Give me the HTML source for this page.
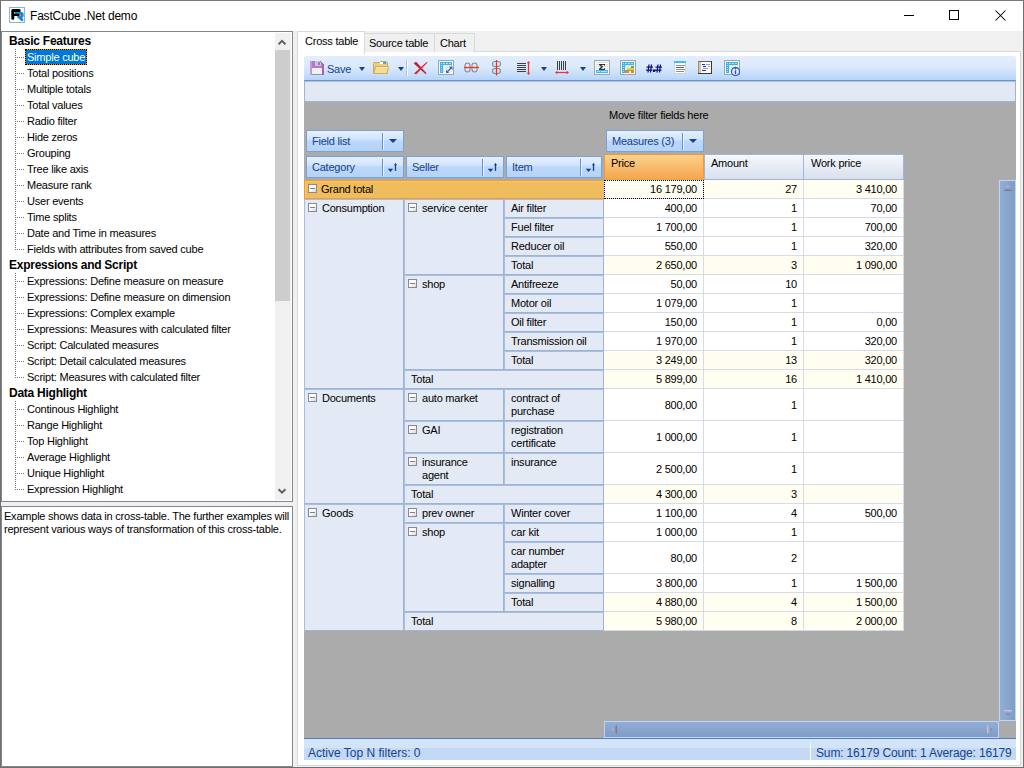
<!DOCTYPE html>
<html><head><meta charset="utf-8">
<style>
*{margin:0;padding:0;box-sizing:border-box}
html,body{width:1024px;height:768px;overflow:hidden;background:#f0f0f0;font-family:"Liberation Sans",sans-serif;font-size:11px;color:#000}
.a{position:absolute}
.t{position:absolute;white-space:pre;letter-spacing:-0.22px;line-height:16px}
#win{left:0;top:0;width:1024px;height:768px;border:1px solid #6f6f6f;border-top-color:#7a7a7a}
#title{left:1px;top:1px;width:1022px;height:30px;background:#fff}
/* tree */
#tree{left:1px;top:31px;width:292px;height:471px;background:#fff;border:1px solid #828790}
#tsb{left:275px;top:33px;width:16px;height:467px;background:#f0f0f0}
#tthumb{left:275px;top:50px;width:15px;height:251px;background:#cdcdcd}
#desc{left:1px;top:506px;width:292px;height:261px;background:#fff;border:1px solid #828790}
.hdr{font-weight:bold;letter-spacing:-0.25px;font-size:12px}
.dotv{width:1px;background:repeating-linear-gradient(to bottom,#6e6e6e 0,#6e6e6e 1px,transparent 1px,transparent 2px)}
.doth{width:8px;height:1px;background:repeating-linear-gradient(to right,#6e6e6e 0,#6e6e6e 1px,transparent 1px,transparent 2px)}
/* tabs */
#page{left:297px;top:51px;width:724px;height:715px;background:#fff;border:1px solid #d9d9d9}
.tab{position:absolute;top:33px;height:19px;background:#f0f0f0;border:1px solid #d9d9d9;border-bottom:none}
#tabsel{left:297px;top:31px;width:68px;height:23px;background:#fff;border:1px solid #d9d9d9;border-bottom:none}
/* toolbar */
#tb{left:304px;top:56px;width:712px;height:25px;background:linear-gradient(#e3eefd 0%,#dbe9fc 45%,#c6ddfb 80%,#b4d3fb 100%);border-bottom:1px solid #6c95cf;border-radius:2px 2px 0 0}
#fbar{left:304px;top:81px;width:712px;height:21px;background:#e3e9f4;border:1px solid #9fb6d3;border-top-color:#a9c0de}
#grey{left:304px;top:102px;width:712px;height:636px;background:#ababab}
.btn{position:absolute;height:22px;border:1px solid #7ea2cf;background:linear-gradient(#e4efff 0%,#d3e5fc 40%,#bcd8fa 50%,#b4d3f8 100%);}
.btn .dv{position:absolute;top:2px;bottom:1px;width:1px;background:#6f8fbf;box-shadow:1px 0 0 #eaf3ff}
.btxt{color:#15428b}
.arr{position:absolute;width:0;height:0;border-left:4px solid transparent;border-right:4px solid transparent;border-top:4px solid #15428b}
/* grid */
.rh{position:absolute;background:#e4eaf5;border:1px solid #9db4d3;border-left-color:#a8bfdc;border-top-color:#a8bfdc}
.dc{position:absolute;background:#fff;border-right:1px solid #d5dce9;border-bottom:1px solid #d5dce9;text-align:right;padding-right:6px;white-space:pre;letter-spacing:-0.22px;line-height:18px}
.dc.tot{background:#fffef0}
.box{position:absolute;width:9px;height:9px;border:1px solid #868a94;background:linear-gradient(135deg,#fff 0%,#fff 45%,#d4d4d4 100%)}
.box:after{content:"";position:absolute;left:1px;top:3px;width:5px;height:1px;background:#808080}
#status{left:304px;top:738px;width:712px;height:22px;border-top:1px solid #567db8;background:linear-gradient(#d3e3f8 0,#d3e3f8 9px,#c3d9f5 9px,#c3d9f5 100%)}
.stt{color:#15428b;font-size:12px;letter-spacing:-0.15px}
</style></head><body>
<div id="win" class="a"></div>
<div id="title" class="a"></div>
<!-- title icon -->
<div class="a" style="left:9px;top:7px;width:16px;height:16px;border:1px solid #8ab4d0;background:#fff"></div>
<svg class="a" style="left:9px;top:7px" width="16" height="16" viewBox="0 0 16 16">
<path d="M7.2 6.2H11.3Q13.3 6.2 13.3 8Q13.3 9.8 11.2 9.8H9.5L13 12.8" stroke="#1a86cc" stroke-width="2.8" fill="none" stroke-linecap="round" stroke-linejoin="round"/>
<path d="M3.8 11.2V3.6H10.2" stroke="#000" stroke-width="3" fill="none" stroke-linecap="round" stroke-linejoin="round"/>
<path d="M4.5 7.8H9.6" stroke="#000" stroke-width="2.2" fill="none" stroke-linecap="round"/>
</svg>
<div class="t" style="left:30px;top:8px;font-size:12px;letter-spacing:-0.2px;line-height:17px">FastCube .Net demo</div>
<!-- window controls -->
<div class="a" style="left:904px;top:15px;width:10px;height:1px;background:#000"></div>
<div class="a" style="left:949px;top:10px;width:10px;height:10px;border:1px solid #000"></div>
<svg class="a" style="left:995px;top:10px" width="11" height="11" viewBox="0 0 11 11"><path d="M0.5 0.5L10.5 10.5M10.5 0.5L0.5 10.5" stroke="#000" stroke-width="1.05"/></svg>

<!-- TREE -->
<div id="tree" class="a"></div>
<div id="tsb" class="a"></div>
<div id="tthumb" class="a"></div>
<svg class="a" style="left:277px;top:38px" width="10" height="8" viewBox="0 0 10 8"><path d="M1.6 6.2L5 2.8L8.4 6.2" stroke="#606060" stroke-width="2" fill="none"/></svg>
<svg class="a" style="left:277px;top:487px" width="10" height="8" viewBox="0 0 10 8"><path d="M1.6 2.2L5 5.6L8.4 2.2" stroke="#606060" stroke-width="2" fill="none"/></svg>
<div class="t hdr" style="left:9px;top:33px">Basic Features</div>
<div class="a" style="left:25px;top:49px;width:62px;height:16px;background:#0078d7;border:1px solid #ff8c00"></div><div class="a" style="left:25px;top:49px;width:62px;height:16px;border:1px dotted #000"></div>
<div class="t" style="left:27px;top:49px;color:#fff">Simple cube</div>
<div class="a doth" style="left:17px;top:57px"></div>
<div class="t" style="left:27px;top:65px">Total positions</div>
<div class="a doth" style="left:17px;top:73px"></div>
<div class="t" style="left:27px;top:81px">Multiple totals</div>
<div class="a doth" style="left:17px;top:89px"></div>
<div class="t" style="left:27px;top:97px">Total values</div>
<div class="a doth" style="left:17px;top:105px"></div>
<div class="t" style="left:27px;top:113px">Radio filter</div>
<div class="a doth" style="left:17px;top:121px"></div>
<div class="t" style="left:27px;top:129px">Hide zeros</div>
<div class="a doth" style="left:17px;top:137px"></div>
<div class="t" style="left:27px;top:145px">Grouping</div>
<div class="a doth" style="left:17px;top:153px"></div>
<div class="t" style="left:27px;top:161px">Tree like axis</div>
<div class="a doth" style="left:17px;top:169px"></div>
<div class="t" style="left:27px;top:177px">Measure rank</div>
<div class="a doth" style="left:17px;top:185px"></div>
<div class="t" style="left:27px;top:193px">User events</div>
<div class="a doth" style="left:17px;top:201px"></div>
<div class="t" style="left:27px;top:209px">Time splits</div>
<div class="a doth" style="left:17px;top:217px"></div>
<div class="t" style="left:27px;top:225px">Date and Time in measures</div>
<div class="a doth" style="left:17px;top:233px"></div>
<div class="t" style="left:27px;top:241px">Fields with attributes from saved cube</div>
<div class="a doth" style="left:17px;top:249px"></div>
<div class="a dotv" style="left:15px;top:49px;height:201px"></div>
<div class="t hdr" style="left:9px;top:257px">Expressions and Script</div>
<div class="t" style="left:27px;top:273px">Expressions: Define measure on measure</div>
<div class="a doth" style="left:17px;top:281px"></div>
<div class="t" style="left:27px;top:289px">Expressions: Define measure on dimension</div>
<div class="a doth" style="left:17px;top:297px"></div>
<div class="t" style="left:27px;top:305px">Expressions: Complex example</div>
<div class="a doth" style="left:17px;top:313px"></div>
<div class="t" style="left:27px;top:321px">Expressions: Measures with calculated filter</div>
<div class="a doth" style="left:17px;top:329px"></div>
<div class="t" style="left:27px;top:337px">Script: Calculated measures</div>
<div class="a doth" style="left:17px;top:345px"></div>
<div class="t" style="left:27px;top:353px">Script: Detail calculated measures</div>
<div class="a doth" style="left:17px;top:361px"></div>
<div class="t" style="left:27px;top:369px">Script: Measures with calculated filter</div>
<div class="a doth" style="left:17px;top:377px"></div>
<div class="a dotv" style="left:15px;top:273px;height:105px"></div>
<div class="t hdr" style="left:9px;top:385px">Data Highlight</div>
<div class="t" style="left:27px;top:401px">Continous Highlight</div>
<div class="a doth" style="left:17px;top:409px"></div>
<div class="t" style="left:27px;top:417px">Range Highlight</div>
<div class="a doth" style="left:17px;top:425px"></div>
<div class="t" style="left:27px;top:433px">Top Highlight</div>
<div class="a doth" style="left:17px;top:441px"></div>
<div class="t" style="left:27px;top:449px">Average Highlight</div>
<div class="a doth" style="left:17px;top:457px"></div>
<div class="t" style="left:27px;top:465px">Unique Highlight</div>
<div class="a doth" style="left:17px;top:473px"></div>
<div class="t" style="left:27px;top:481px">Expression Highlight</div>
<div class="a doth" style="left:17px;top:489px"></div>
<div class="a dotv" style="left:15px;top:401px;height:89px"></div>

<!-- DESCRIPTION -->
<div id="desc" class="a"></div>
<div class="t" style="left:4px;top:510px;line-height:13px">Example shows data in cross-table. The further examples will
represent various ways of transformation of this cross-table.</div>

<!-- TABS -->
<div id="page" class="a"></div>
<div class="tab" style="left:364px;width:71px"></div>
<div class="tab" style="left:434px;width:41px"></div>
<div id="tabsel" class="a"></div>
<div class="t" style="left:305px;top:33px">Cross table</div>
<div class="t" style="left:369px;top:35px">Source table</div>
<div class="t" style="left:440px;top:35px">Chart</div>

<!-- TOOLBAR -->
<div id="tb" class="a"></div>
<div class="t btxt" style="left:327px;top:61px">Save</div>
<svg class="a" style="left:310px;top:61px" width="14" height="14" viewBox="0 0 14 14" shape-rendering="crispEdges"><path d="M0 0H10L14 4V14H0Z" fill="#b57ad0"/><rect x="0" y="0" width="2" height="14" fill="#c994e0"/><rect x="12" y="3" width="2" height="11" fill="#a262c2"/><rect x="5" y="0" width="6" height="5" fill="#c8c8c8"/><rect x="8" y="1" width="2" height="3" fill="#b070d0"/><rect x="2" y="7" width="10" height="6" fill="#eef4f2"/><rect x="2" y="13" width="10" height="1" fill="#8a9a90"/><path d="M10 0L14 4" stroke="#9a5abb" stroke-width="1" fill="none" shape-rendering="auto"/></svg>
<div class="arr" style="left:359px;top:67px;border-left-width:3px;border-right-width:3px;border-top-width:4px"></div>
<div class="arr" style="left:398px;top:67px;border-left-width:3px;border-right-width:3px;border-top-width:4px"></div>
<div class="arr" style="left:541px;top:67px;border-left-width:3px;border-right-width:3px;border-top-width:4px"></div>
<div class="arr" style="left:580px;top:67px;border-left-width:3px;border-right-width:3px;border-top-width:4px"></div>
<div class="a" style="left:406px;top:60px;width:1px;height:16px;background:#a8c2e4"></div><div class="a" style="left:407px;top:60px;width:1px;height:16px;background:#fff"></div>
<svg class="a" style="left:373px;top:61px" width="16" height="13" viewBox="0 0 16 13" shape-rendering="crispEdges"><path d="M0.5 2.5Q0.5 1.5 1.5 1.5H6.5L7.5 0.5H13.5L14.5 1.5V12.5H0.5Z" fill="#edcd7e" stroke="#d0a850" stroke-width="1" shape-rendering="auto"/><rect x="7" y="1" width="3" height="2" fill="#ffffff"/><rect x="10" y="1" width="3" height="2" fill="#38aef0"/><path d="M2.5 5.5H15.5L14 12.5H1Z" fill="#f5dc95" stroke="#d4ac55" stroke-width="1" shape-rendering="auto"/><rect x="3" y="6" width="12" height="1" fill="#fbeab8"/></svg>
<svg class="a" style="left:413px;top:61px" width="15" height="14" viewBox="0 0 15 14"><path d="M0.8 2.6Q1.5 0.6 3.4 1L13.6 12.2L12.4 13Z" fill="#c8202c"/><path d="M13.9 0.8L14.3 1.7L3.6 13Q2 13.6 1.2 12.2Z" fill="#d42a32"/></svg>
<svg class="a" style="left:438px;top:60px" width="16" height="15" viewBox="0 0 16 15" shape-rendering="crispEdges"><rect x="0" y="0" width="16" height="15" fill="#9aa8a8"/><rect x="1" y="1" width="14" height="13" fill="#f4f8f8"/><rect x="2" y="2" width="12" height="11" fill="#dfe6e6"/><rect x="2" y="2" width="12" height="3" fill="#3db4ee"/><rect x="2" y="5" width="3" height="8" fill="#3db4ee"/><rect x="5" y="3" width="2" height="1" fill="#a8e0f8"/><rect x="8" y="3" width="2" height="1" fill="#a8e0f8"/><rect x="11" y="3" width="2" height="1" fill="#a8e0f8"/><rect x="3" y="3" width="1" height="1" fill="#a8e0f8"/><rect x="3" y="5" width="1" height="1" fill="#a8e0f8"/><rect x="3" y="7" width="1" height="1" fill="#a8e0f8"/><rect x="3" y="9" width="1" height="1" fill="#a8e0f8"/><rect x="3" y="11" width="1" height="1" fill="#a8e0f8"/><rect x="6" y="6" width="2" height="1" fill="#ffffff"/><rect x="9" y="6" width="2" height="1" fill="#ffffff"/><rect x="12" y="6" width="2" height="1" fill="#ffffff"/><rect x="6" y="8" width="2" height="1" fill="#ffffff"/><rect x="9" y="8" width="2" height="1" fill="#ffffff"/><rect x="12" y="8" width="2" height="1" fill="#ffffff"/><rect x="6" y="10" width="2" height="1" fill="#ffffff"/><rect x="9" y="10" width="2" height="1" fill="#ffffff"/><rect x="12" y="10" width="2" height="1" fill="#ffffff"/><rect x="6" y="12" width="2" height="1" fill="#ffffff"/><rect x="9" y="12" width="2" height="1" fill="#ffffff"/><rect x="12" y="12" width="2" height="1" fill="#ffffff"/><g shape-rendering="auto"><path d="M9.5 11.5L13 8" stroke="#3458d0" stroke-width="1.1"/><path d="M11 6.5L14.5 6.5L14.5 10Z M8 9.8L8 13L11.2 13Z" fill="#3458d0"/></g></svg>
<svg class="a" style="left:463px;top:62px" width="17" height="11" viewBox="0 0 17 11"><rect x="2" y="1" width="5" height="9" rx="2.5" fill="none" stroke="#8a8a8a" stroke-width="1.1"/><rect x="9" y="1" width="5" height="9" rx="2.5" fill="none" stroke="#8a8a8a" stroke-width="1.1"/><path d="M1 5.5H16" stroke="#ee3322" stroke-width="1.3"/></svg>
<svg class="a" style="left:491px;top:60px" width="11" height="16" viewBox="0 0 11 16"><rect x="1.5" y="1.5" width="8" height="5" rx="2.5" fill="none" stroke="#8a8a8a" stroke-width="1.1"/><rect x="1.5" y="8.5" width="8" height="5" rx="2.5" fill="none" stroke="#8a8a8a" stroke-width="1.1"/><path d="M5.5 0V15.5" stroke="#ee3322" stroke-width="1.3"/></svg>
<svg class="a" style="left:516px;top:60px" width="15" height="16" viewBox="0 0 15 16"><path d="M1 3.5H10M1 5.5H10M1 7.5H10M1 9.5H10M1 11.5H10" stroke="#404040" stroke-width="1"/><path d="M12.5 2V14" stroke="#ee3322" stroke-width="1.2"/><path d="M10.8 3.3L12.5 1L14.2 3.3ZM10.8 12.7L12.5 15L14.2 12.7Z" fill="#ee3322"/></svg>
<svg class="a" style="left:554px;top:60px" width="16" height="15" viewBox="0 0 16 15"><path d="M3.5 1V10M5.5 1V10M7.5 1V10M9.5 1V10M11.5 1V10" stroke="#404040" stroke-width="1"/><path d="M2 12.5H14" stroke="#ee3322" stroke-width="1.2"/><path d="M3.3 10.8L1 12.5L3.3 14.2ZM12.7 10.8L15 12.5L12.7 14.2Z" fill="#ee3322"/></svg>
<svg class="a" style="left:594px;top:60px" width="16" height="15" viewBox="0 0 16 15" shape-rendering="crispEdges"><rect x="0" y="0" width="16" height="15" fill="#9aa8a8"/><rect x="1" y="1" width="14" height="13" fill="#f6f9f9"/><rect x="2" y="2" width="12" height="8" fill="#d9dfdf"/><rect x="2" y="3" width="12" height="1" fill="#ffffff"/><rect x="2" y="5" width="12" height="1" fill="#ffffff"/><rect x="2" y="7" width="12" height="1" fill="#ffffff"/><rect x="2" y="9" width="12" height="1" fill="#ffffff"/><rect x="2" y="10" width="12" height="3" fill="#44b8f0"/><rect x="3" y="11" width="3" height="1" fill="#a8e0f8"/><rect x="7" y="11" width="3" height="1" fill="#a8e0f8"/><rect x="10" y="11" width="3" height="1" fill="#a8e0f8"/><rect x="5" y="4" width="6" height="1" fill="#303030"/><rect x="5" y="9" width="6" height="1" fill="#303030"/><rect x="10" y="5" width="1" height="1" fill="#606060"/><rect x="10" y="8" width="1" height="1" fill="#606060"/><path d="M5.5 4.5L8.2 6.8L5.5 9.2" stroke="#303030" stroke-width="1.4" fill="none" shape-rendering="auto"/></svg>
<svg class="a" style="left:620px;top:60px" width="16" height="15" viewBox="0 0 16 15" shape-rendering="crispEdges"><rect x="0" y="0" width="16" height="15" fill="#9aa8a8"/><rect x="1" y="1" width="14" height="13" fill="#f4f8f8"/><rect x="2" y="2" width="12" height="11" fill="#dfe6e6"/><rect x="2" y="2" width="12" height="3" fill="#3db4ee"/><rect x="2" y="5" width="3" height="8" fill="#3db4ee"/><rect x="5" y="3" width="2" height="1" fill="#a8e0f8"/><rect x="8" y="3" width="2" height="1" fill="#a8e0f8"/><rect x="11" y="3" width="2" height="1" fill="#a8e0f8"/><rect x="3" y="3" width="1" height="1" fill="#a8e0f8"/><rect x="3" y="5" width="1" height="1" fill="#a8e0f8"/><rect x="3" y="7" width="1" height="1" fill="#a8e0f8"/><rect x="3" y="9" width="1" height="1" fill="#a8e0f8"/><rect x="3" y="11" width="1" height="1" fill="#a8e0f8"/><rect x="6" y="6" width="2" height="1" fill="#ffffff"/><rect x="9" y="6" width="2" height="1" fill="#ffffff"/><rect x="12" y="6" width="2" height="1" fill="#ffffff"/><rect x="6" y="8" width="2" height="1" fill="#ffffff"/><rect x="9" y="8" width="2" height="1" fill="#ffffff"/><rect x="12" y="8" width="2" height="1" fill="#ffffff"/><rect x="6" y="10" width="2" height="1" fill="#ffffff"/><rect x="9" y="10" width="2" height="1" fill="#ffffff"/><rect x="12" y="10" width="2" height="1" fill="#ffffff"/><rect x="6" y="12" width="2" height="1" fill="#ffffff"/><rect x="9" y="12" width="2" height="1" fill="#ffffff"/><rect x="12" y="12" width="2" height="1" fill="#ffffff"/><rect x="11" y="6" width="3" height="3" fill="#5aae3a"/><rect x="7" y="8" width="7" height="2" fill="#d8d040"/><rect x="5" y="10" width="9" height="3" fill="#e08830"/><rect x="9" y="11" width="2" height="2" fill="#f4f4f4"/></svg>
<svg class="a" style="left:646px;top:64px" width="16" height="9" viewBox="0 0 16 9"><path d="M3 0.5L2 8.5M5.5 0.5L4.5 8.5M0.5 3H7M0 6H6.5" stroke="#10107a" stroke-width="1.25"/><rect x="7" y="5.5" width="2.2" height="2.5" fill="#10107a"/><path d="M12 0.5L11 8.5M14.5 0.5L13.5 8.5M9.5 3H16M9 6H15.5" stroke="#10107a" stroke-width="1.25"/></svg>
<svg class="a" style="left:674px;top:61px" width="12" height="13" viewBox="0 0 12 13" shape-rendering="crispEdges"><rect x="0" y="0" width="12" height="13" fill="#c8d4d4"/><rect x="1" y="2" width="10" height="10" fill="#ffffff"/><rect x="0" y="0" width="12" height="2" fill="#44c0f0"/><rect x="2" y="4" width="9" height="1" fill="#8a9090"/><rect x="2" y="6" width="8" height="1" fill="#50605a"/><rect x="2" y="8" width="9" height="1" fill="#8a9090"/><rect x="2" y="10" width="8" height="1" fill="#8a9090"/></svg>
<svg class="a" style="left:698px;top:61px" width="14" height="13" viewBox="0 0 14 13" shape-rendering="crispEdges"><rect x="0" y="0" width="14" height="13" fill="#3e3828"/><rect x="0" y="0" width="13" height="12" fill="#fbfbf8"/><rect x="0" y="0" width="13" height="1" fill="#6a6050"/><rect x="0" y="0" width="1" height="12" fill="#9a9080"/><rect x="1" y="1" width="2" height="11" fill="#cfc6ae"/><rect x="4" y="3" width="3" height="1" fill="#1030f0"/><rect x="5" y="5" width="3" height="1" fill="#1030f0"/><rect x="4" y="9" width="4" height="1" fill="#1030f0"/><rect x="8" y="3" width="4" height="1" fill="#a0a0a0"/><rect x="10" y="5" width="2" height="1" fill="#a0a0a0"/><rect x="5" y="7" width="5" height="1" fill="#a0a0a0"/></svg>
<svg class="a" style="left:724px;top:60px" width="16" height="16" viewBox="0 0 16 16" shape-rendering="crispEdges"><rect x="0" y="0" width="16" height="15" fill="#9aa8a8"/><rect x="1" y="1" width="14" height="13" fill="#f4f8f8"/><rect x="2" y="2" width="12" height="11" fill="#dfe6e6"/><rect x="2" y="2" width="12" height="3" fill="#3db4ee"/><rect x="2" y="5" width="3" height="8" fill="#3db4ee"/><rect x="5" y="3" width="2" height="1" fill="#a8e0f8"/><rect x="8" y="3" width="2" height="1" fill="#a8e0f8"/><rect x="11" y="3" width="2" height="1" fill="#a8e0f8"/><rect x="3" y="3" width="1" height="1" fill="#a8e0f8"/><rect x="3" y="5" width="1" height="1" fill="#a8e0f8"/><rect x="3" y="7" width="1" height="1" fill="#a8e0f8"/><rect x="3" y="9" width="1" height="1" fill="#a8e0f8"/><rect x="3" y="11" width="1" height="1" fill="#a8e0f8"/><rect x="6" y="6" width="2" height="1" fill="#ffffff"/><rect x="9" y="6" width="2" height="1" fill="#ffffff"/><rect x="12" y="6" width="2" height="1" fill="#ffffff"/><rect x="6" y="8" width="2" height="1" fill="#ffffff"/><rect x="9" y="8" width="2" height="1" fill="#ffffff"/><rect x="12" y="8" width="2" height="1" fill="#ffffff"/><rect x="6" y="10" width="2" height="1" fill="#ffffff"/><rect x="9" y="10" width="2" height="1" fill="#ffffff"/><rect x="12" y="10" width="2" height="1" fill="#ffffff"/><rect x="6" y="12" width="2" height="1" fill="#ffffff"/><rect x="9" y="12" width="2" height="1" fill="#ffffff"/><rect x="12" y="12" width="2" height="1" fill="#ffffff"/><g shape-rendering="auto"><circle cx="11.5" cy="11.5" r="4" fill="#eceff8" stroke="#3458d8" stroke-width="1.3"/><path d="M11.5 10.3V14" stroke="#2a4ad0" stroke-width="1.4"/><circle cx="11.5" cy="8.8" r="0.8" fill="#2a4ad0"/></g></svg>
<div id="fbar" class="a"></div>
<div id="grey" class="a"></div>

<div class="t" style="left:609px;top:107px;color:#000">Move filter fields here</div>
<div class="btn" style="left:306px;top:130px;width:98px;height:22px"><div class="dv" style="left:75px"></div></div><div class="t btxt" style="left:312px;top:133px">Field list</div><div class="arr" style="left:389px;top:139px"></div>
<div class="btn" style="left:606px;top:130px;width:98px;height:22px"><div class="dv" style="left:75px"></div></div><div class="t btxt" style="left:612px;top:133px">Measures (3)</div><div class="arr" style="left:689px;top:139px"></div>
<div class="btn" style="left:306px;top:156px;width:98px;height:22px"><div class="dv" style="left:75px"></div></div><div class="t btxt" style="left:312px;top:159px">Category</div><svg class="a" style="left:387px;top:160px" width="14" height="14" viewBox="0 0 14 14"><path d="M0.8 8.8H6.2L3.5 12Z" fill="#15428b"/><path d="M8.5 11V4.5" stroke="#15428b" stroke-width="1.3" fill="none"/><path d="M7 5.3L8.5 2.8L10 5.3Z" fill="#15428b"/></svg>
<div class="btn" style="left:406px;top:156px;width:98px;height:22px"><div class="dv" style="left:75px"></div></div><div class="t btxt" style="left:412px;top:159px">Seller</div><svg class="a" style="left:487px;top:160px" width="14" height="14" viewBox="0 0 14 14"><path d="M0.8 8.8H6.2L3.5 12Z" fill="#15428b"/><path d="M8.5 11V4.5" stroke="#15428b" stroke-width="1.3" fill="none"/><path d="M7 5.3L8.5 2.8L10 5.3Z" fill="#15428b"/></svg>
<div class="btn" style="left:506px;top:156px;width:96px;height:22px"><div class="dv" style="left:73px"></div></div><div class="t btxt" style="left:512px;top:159px">Item</div><svg class="a" style="left:585px;top:160px" width="14" height="14" viewBox="0 0 14 14"><path d="M0.8 8.8H6.2L3.5 12Z" fill="#15428b"/><path d="M8.5 11V4.5" stroke="#15428b" stroke-width="1.3" fill="none"/><path d="M7 5.3L8.5 2.8L10 5.3Z" fill="#15428b"/></svg>
<div class="a" style="left:604px;top:154px;width:100px;height:26px;background:linear-gradient(#fcd28f,#f4a34a);border:1px solid #f39a35;border-bottom:none"></div>
<div class="t" style="left:611px;top:155px">Price</div>
<div class="a" style="left:704px;top:154px;width:200px;height:26px;background:linear-gradient(#f6f8fc,#d8e0ee);border:1px solid #a0b8d6"></div>
<div class="a" style="left:803px;top:154px;width:1px;height:26px;background:#a0b8d6"></div>
<div class="t" style="left:711px;top:155px">Amount</div>
<div class="t" style="left:811px;top:155px">Work price</div>
<div class="a" style="left:304px;top:180px;width:301px;height:19px;background:#efbc5e;border:1px solid #f5992f;border-right:none;box-shadow:inset 1px 1px 0 #f6c76c"></div>
<div class="box" style="left:308px;top:184px"></div>
<div class="t" style="left:321px;top:181px">Grand total</div>
<div class="dc tot" style="left:604px;top:180px;width:100px;height:19px;padding-top:0px;outline:1px dotted #000;outline-offset:-1px;">16 179,00</div>
<div class="dc tot" style="left:704px;top:180px;width:100px;height:19px;padding-top:0px;">27</div>
<div class="dc tot" style="left:804px;top:180px;width:100px;height:19px;padding-top:0px;">3 410,00</div>
<div class="dc" style="left:604px;top:199px;width:100px;height:19px;padding-top:0px;">400,00</div>
<div class="dc" style="left:704px;top:199px;width:100px;height:19px;padding-top:0px;">1</div>
<div class="dc" style="left:804px;top:199px;width:100px;height:19px;padding-top:0px;">70,00</div>
<div class="dc" style="left:604px;top:218px;width:100px;height:19px;padding-top:0px;">1 700,00</div>
<div class="dc" style="left:704px;top:218px;width:100px;height:19px;padding-top:0px;">1</div>
<div class="dc" style="left:804px;top:218px;width:100px;height:19px;padding-top:0px;">700,00</div>
<div class="dc" style="left:604px;top:237px;width:100px;height:19px;padding-top:0px;">550,00</div>
<div class="dc" style="left:704px;top:237px;width:100px;height:19px;padding-top:0px;">1</div>
<div class="dc" style="left:804px;top:237px;width:100px;height:19px;padding-top:0px;">320,00</div>
<div class="dc tot" style="left:604px;top:256px;width:100px;height:19px;padding-top:0px;">2 650,00</div>
<div class="dc tot" style="left:704px;top:256px;width:100px;height:19px;padding-top:0px;">3</div>
<div class="dc tot" style="left:804px;top:256px;width:100px;height:19px;padding-top:0px;">1 090,00</div>
<div class="dc" style="left:604px;top:275px;width:100px;height:19px;padding-top:0px;">50,00</div>
<div class="dc" style="left:704px;top:275px;width:100px;height:19px;padding-top:0px;">10</div>
<div class="dc" style="left:804px;top:275px;width:100px;height:19px;padding-top:0px;"></div>
<div class="dc" style="left:604px;top:294px;width:100px;height:19px;padding-top:0px;">1 079,00</div>
<div class="dc" style="left:704px;top:294px;width:100px;height:19px;padding-top:0px;">1</div>
<div class="dc" style="left:804px;top:294px;width:100px;height:19px;padding-top:0px;"></div>
<div class="dc" style="left:604px;top:313px;width:100px;height:19px;padding-top:0px;">150,00</div>
<div class="dc" style="left:704px;top:313px;width:100px;height:19px;padding-top:0px;">1</div>
<div class="dc" style="left:804px;top:313px;width:100px;height:19px;padding-top:0px;">0,00</div>
<div class="dc" style="left:604px;top:332px;width:100px;height:19px;padding-top:0px;">1 970,00</div>
<div class="dc" style="left:704px;top:332px;width:100px;height:19px;padding-top:0px;">1</div>
<div class="dc" style="left:804px;top:332px;width:100px;height:19px;padding-top:0px;">320,00</div>
<div class="dc tot" style="left:604px;top:351px;width:100px;height:19px;padding-top:0px;">3 249,00</div>
<div class="dc tot" style="left:704px;top:351px;width:100px;height:19px;padding-top:0px;">13</div>
<div class="dc tot" style="left:804px;top:351px;width:100px;height:19px;padding-top:0px;">320,00</div>
<div class="dc tot" style="left:604px;top:370px;width:100px;height:19px;padding-top:0px;">5 899,00</div>
<div class="dc tot" style="left:704px;top:370px;width:100px;height:19px;padding-top:0px;">16</div>
<div class="dc tot" style="left:804px;top:370px;width:100px;height:19px;padding-top:0px;">1 410,00</div>
<div class="dc" style="left:604px;top:389px;width:100px;height:32px;padding-top:7px;">800,00</div>
<div class="dc" style="left:704px;top:389px;width:100px;height:32px;padding-top:7px;">1</div>
<div class="dc" style="left:804px;top:389px;width:100px;height:32px;padding-top:7px;"></div>
<div class="dc" style="left:604px;top:421px;width:100px;height:32px;padding-top:7px;">1 000,00</div>
<div class="dc" style="left:704px;top:421px;width:100px;height:32px;padding-top:7px;">1</div>
<div class="dc" style="left:804px;top:421px;width:100px;height:32px;padding-top:7px;"></div>
<div class="dc" style="left:604px;top:453px;width:100px;height:32px;padding-top:7px;">2 500,00</div>
<div class="dc" style="left:704px;top:453px;width:100px;height:32px;padding-top:7px;">1</div>
<div class="dc" style="left:804px;top:453px;width:100px;height:32px;padding-top:7px;"></div>
<div class="dc tot" style="left:604px;top:485px;width:100px;height:19px;padding-top:0px;">4 300,00</div>
<div class="dc tot" style="left:704px;top:485px;width:100px;height:19px;padding-top:0px;">3</div>
<div class="dc tot" style="left:804px;top:485px;width:100px;height:19px;padding-top:0px;"></div>
<div class="dc" style="left:604px;top:504px;width:100px;height:19px;padding-top:0px;">1 100,00</div>
<div class="dc" style="left:704px;top:504px;width:100px;height:19px;padding-top:0px;">4</div>
<div class="dc" style="left:804px;top:504px;width:100px;height:19px;padding-top:0px;">500,00</div>
<div class="dc" style="left:604px;top:523px;width:100px;height:19px;padding-top:0px;">1 000,00</div>
<div class="dc" style="left:704px;top:523px;width:100px;height:19px;padding-top:0px;">1</div>
<div class="dc" style="left:804px;top:523px;width:100px;height:19px;padding-top:0px;"></div>
<div class="dc" style="left:604px;top:542px;width:100px;height:32px;padding-top:7px;">80,00</div>
<div class="dc" style="left:704px;top:542px;width:100px;height:32px;padding-top:7px;">2</div>
<div class="dc" style="left:804px;top:542px;width:100px;height:32px;padding-top:7px;"></div>
<div class="dc" style="left:604px;top:574px;width:100px;height:19px;padding-top:0px;">3 800,00</div>
<div class="dc" style="left:704px;top:574px;width:100px;height:19px;padding-top:0px;">1</div>
<div class="dc" style="left:804px;top:574px;width:100px;height:19px;padding-top:0px;">1 500,00</div>
<div class="dc tot" style="left:604px;top:593px;width:100px;height:19px;padding-top:0px;">4 880,00</div>
<div class="dc tot" style="left:704px;top:593px;width:100px;height:19px;padding-top:0px;">4</div>
<div class="dc tot" style="left:804px;top:593px;width:100px;height:19px;padding-top:0px;">1 500,00</div>
<div class="dc tot" style="left:604px;top:612px;width:100px;height:19px;padding-top:0px;">5 980,00</div>
<div class="dc tot" style="left:704px;top:612px;width:100px;height:19px;padding-top:0px;">8</div>
<div class="dc tot" style="left:804px;top:612px;width:100px;height:19px;padding-top:0px;">2 000,00</div>
<div class="rh" style="left:304px;top:199px;width:100px;height:190px"></div><div class="box" style="left:308px;top:203px"></div><div class="t" style="left:322px;top:200px;line-height:13px;padding-top:2px">Consumption</div>
<div class="rh" style="left:404px;top:199px;width:100px;height:76px"></div><div class="box" style="left:408px;top:203px"></div><div class="t" style="left:422px;top:200px;line-height:13px;padding-top:2px">service center</div>
<div class="rh" style="left:504px;top:199px;width:100px;height:19px"></div><div class="t" style="left:511px;top:200px;line-height:13px;padding-top:2px">Air filter</div>
<div class="rh" style="left:504px;top:218px;width:100px;height:19px"></div><div class="t" style="left:511px;top:219px;line-height:13px;padding-top:2px">Fuel filter</div>
<div class="rh" style="left:504px;top:237px;width:100px;height:19px"></div><div class="t" style="left:511px;top:238px;line-height:13px;padding-top:2px">Reducer oil</div>
<div class="rh" style="left:504px;top:256px;width:100px;height:19px"></div><div class="t" style="left:511px;top:257px;line-height:13px;padding-top:2px">Total</div>
<div class="rh" style="left:404px;top:275px;width:100px;height:95px"></div><div class="box" style="left:408px;top:279px"></div><div class="t" style="left:422px;top:276px;line-height:13px;padding-top:2px">shop</div>
<div class="rh" style="left:504px;top:275px;width:100px;height:19px"></div><div class="t" style="left:511px;top:276px;line-height:13px;padding-top:2px">Antifreeze</div>
<div class="rh" style="left:504px;top:294px;width:100px;height:19px"></div><div class="t" style="left:511px;top:295px;line-height:13px;padding-top:2px">Motor oil</div>
<div class="rh" style="left:504px;top:313px;width:100px;height:19px"></div><div class="t" style="left:511px;top:314px;line-height:13px;padding-top:2px">Oil filter</div>
<div class="rh" style="left:504px;top:332px;width:100px;height:19px"></div><div class="t" style="left:511px;top:333px;line-height:13px;padding-top:2px">Transmission oil</div>
<div class="rh" style="left:504px;top:351px;width:100px;height:19px"></div><div class="t" style="left:511px;top:352px;line-height:13px;padding-top:2px">Total</div>
<div class="rh" style="left:404px;top:370px;width:200px;height:19px"></div><div class="t" style="left:411px;top:371px;line-height:13px;padding-top:2px">Total</div>
<div class="rh" style="left:304px;top:389px;width:100px;height:115px"></div><div class="box" style="left:308px;top:393px"></div><div class="t" style="left:322px;top:390px;line-height:13px;padding-top:2px">Documents</div>
<div class="rh" style="left:404px;top:389px;width:100px;height:32px"></div><div class="box" style="left:408px;top:393px"></div><div class="t" style="left:422px;top:390px;line-height:13px;padding-top:2px">auto market</div>
<div class="rh" style="left:504px;top:389px;width:100px;height:32px"></div><div class="t" style="left:511px;top:390px;line-height:13px;padding-top:2px">contract of
purchase</div>
<div class="rh" style="left:404px;top:421px;width:100px;height:32px"></div><div class="box" style="left:408px;top:425px"></div><div class="t" style="left:422px;top:422px;line-height:13px;padding-top:2px">GAI</div>
<div class="rh" style="left:504px;top:421px;width:100px;height:32px"></div><div class="t" style="left:511px;top:422px;line-height:13px;padding-top:2px">registration
certificate</div>
<div class="rh" style="left:404px;top:453px;width:100px;height:32px"></div><div class="box" style="left:408px;top:457px"></div><div class="t" style="left:422px;top:454px;line-height:13px;padding-top:2px">insurance
agent</div>
<div class="rh" style="left:504px;top:453px;width:100px;height:32px"></div><div class="t" style="left:511px;top:454px;line-height:13px;padding-top:2px">insurance</div>
<div class="rh" style="left:404px;top:485px;width:200px;height:19px"></div><div class="t" style="left:411px;top:486px;line-height:13px;padding-top:2px">Total</div>
<div class="rh" style="left:304px;top:504px;width:100px;height:127px"></div><div class="box" style="left:308px;top:508px"></div><div class="t" style="left:322px;top:505px;line-height:13px;padding-top:2px">Goods</div>
<div class="rh" style="left:404px;top:504px;width:100px;height:19px"></div><div class="box" style="left:408px;top:508px"></div><div class="t" style="left:422px;top:505px;line-height:13px;padding-top:2px">prev owner</div>
<div class="rh" style="left:504px;top:504px;width:100px;height:19px"></div><div class="t" style="left:511px;top:505px;line-height:13px;padding-top:2px">Winter cover</div>
<div class="rh" style="left:404px;top:523px;width:100px;height:89px"></div><div class="box" style="left:408px;top:527px"></div><div class="t" style="left:422px;top:524px;line-height:13px;padding-top:2px">shop</div>
<div class="rh" style="left:504px;top:523px;width:100px;height:19px"></div><div class="t" style="left:511px;top:524px;line-height:13px;padding-top:2px">car kit</div>
<div class="rh" style="left:504px;top:542px;width:100px;height:32px"></div><div class="t" style="left:511px;top:543px;line-height:13px;padding-top:2px">car number
adapter</div>
<div class="rh" style="left:504px;top:574px;width:100px;height:19px"></div><div class="t" style="left:511px;top:575px;line-height:13px;padding-top:2px">signalling</div>
<div class="rh" style="left:504px;top:593px;width:100px;height:19px"></div><div class="t" style="left:511px;top:594px;line-height:13px;padding-top:2px">Total</div>
<div class="rh" style="left:404px;top:612px;width:200px;height:19px"></div><div class="t" style="left:411px;top:613px;line-height:13px;padding-top:2px">Total</div>
<div class="a" style="left:999px;top:180px;width:17px;height:541px;background:linear-gradient(90deg,#93aed4,#7e9dc7);border:1px solid #b9d7fc"></div>
<div class="a" style="left:604px;top:721px;width:395px;height:17px;background:linear-gradient(#93aed4,#7e9dc7);border:1px solid #b9d7fc"></div>
<svg class="a" style="left:1003px;top:185px" width="10" height="7"><defs><linearGradient id="ga" x1="0" y1="0" x2="0" y2="1"><stop offset="0" stop-color="#c8cae0"/><stop offset="1" stop-color="#6e7498"/></linearGradient></defs><path d="M5 0.3L9.5 6H0.5Z" fill="url(#ga)"/></svg>
<svg class="a" style="left:1003px;top:709px" width="10" height="7"><defs><linearGradient id="gb" x1="0" y1="0" x2="0" y2="1"><stop offset="0" stop-color="#c8cae0"/><stop offset="1" stop-color="#6e7498"/></linearGradient></defs><path d="M5 6.5L9.5 1H0.5Z" fill="url(#gb)"/></svg>
<svg class="a" style="left:986px;top:724px" width="7" height="11"><defs><linearGradient id="gc" x1="0" y1="0" x2="1" y2="0"><stop offset="0" stop-color="#c8cae0"/><stop offset="1" stop-color="#6e7498"/></linearGradient></defs><path d="M6.5 5.5L1 1V10Z" fill="url(#gc)"/></svg>
<svg class="a" style="left:611px;top:724px" width="7" height="11"><defs><linearGradient id="gd" x1="0" y1="0" x2="1" y2="0"><stop offset="0" stop-color="#c8cae0"/><stop offset="1" stop-color="#6e7498"/></linearGradient></defs><path d="M0.5 5.5L6 1V10Z" fill="url(#gd)"/></svg>

<div id="status" class="a"></div>
<div class="t stt" style="left:308px;top:745px;letter-spacing:0px">Active Top N filters: 0</div>
<div class="a" style="left:810px;top:743px;width:1px;height:17px;background:#fff"></div>
<div class="t stt" style="left:816px;top:745px">Sum: 16179 Count: 1 Average: 16179</div>
</body></html>
